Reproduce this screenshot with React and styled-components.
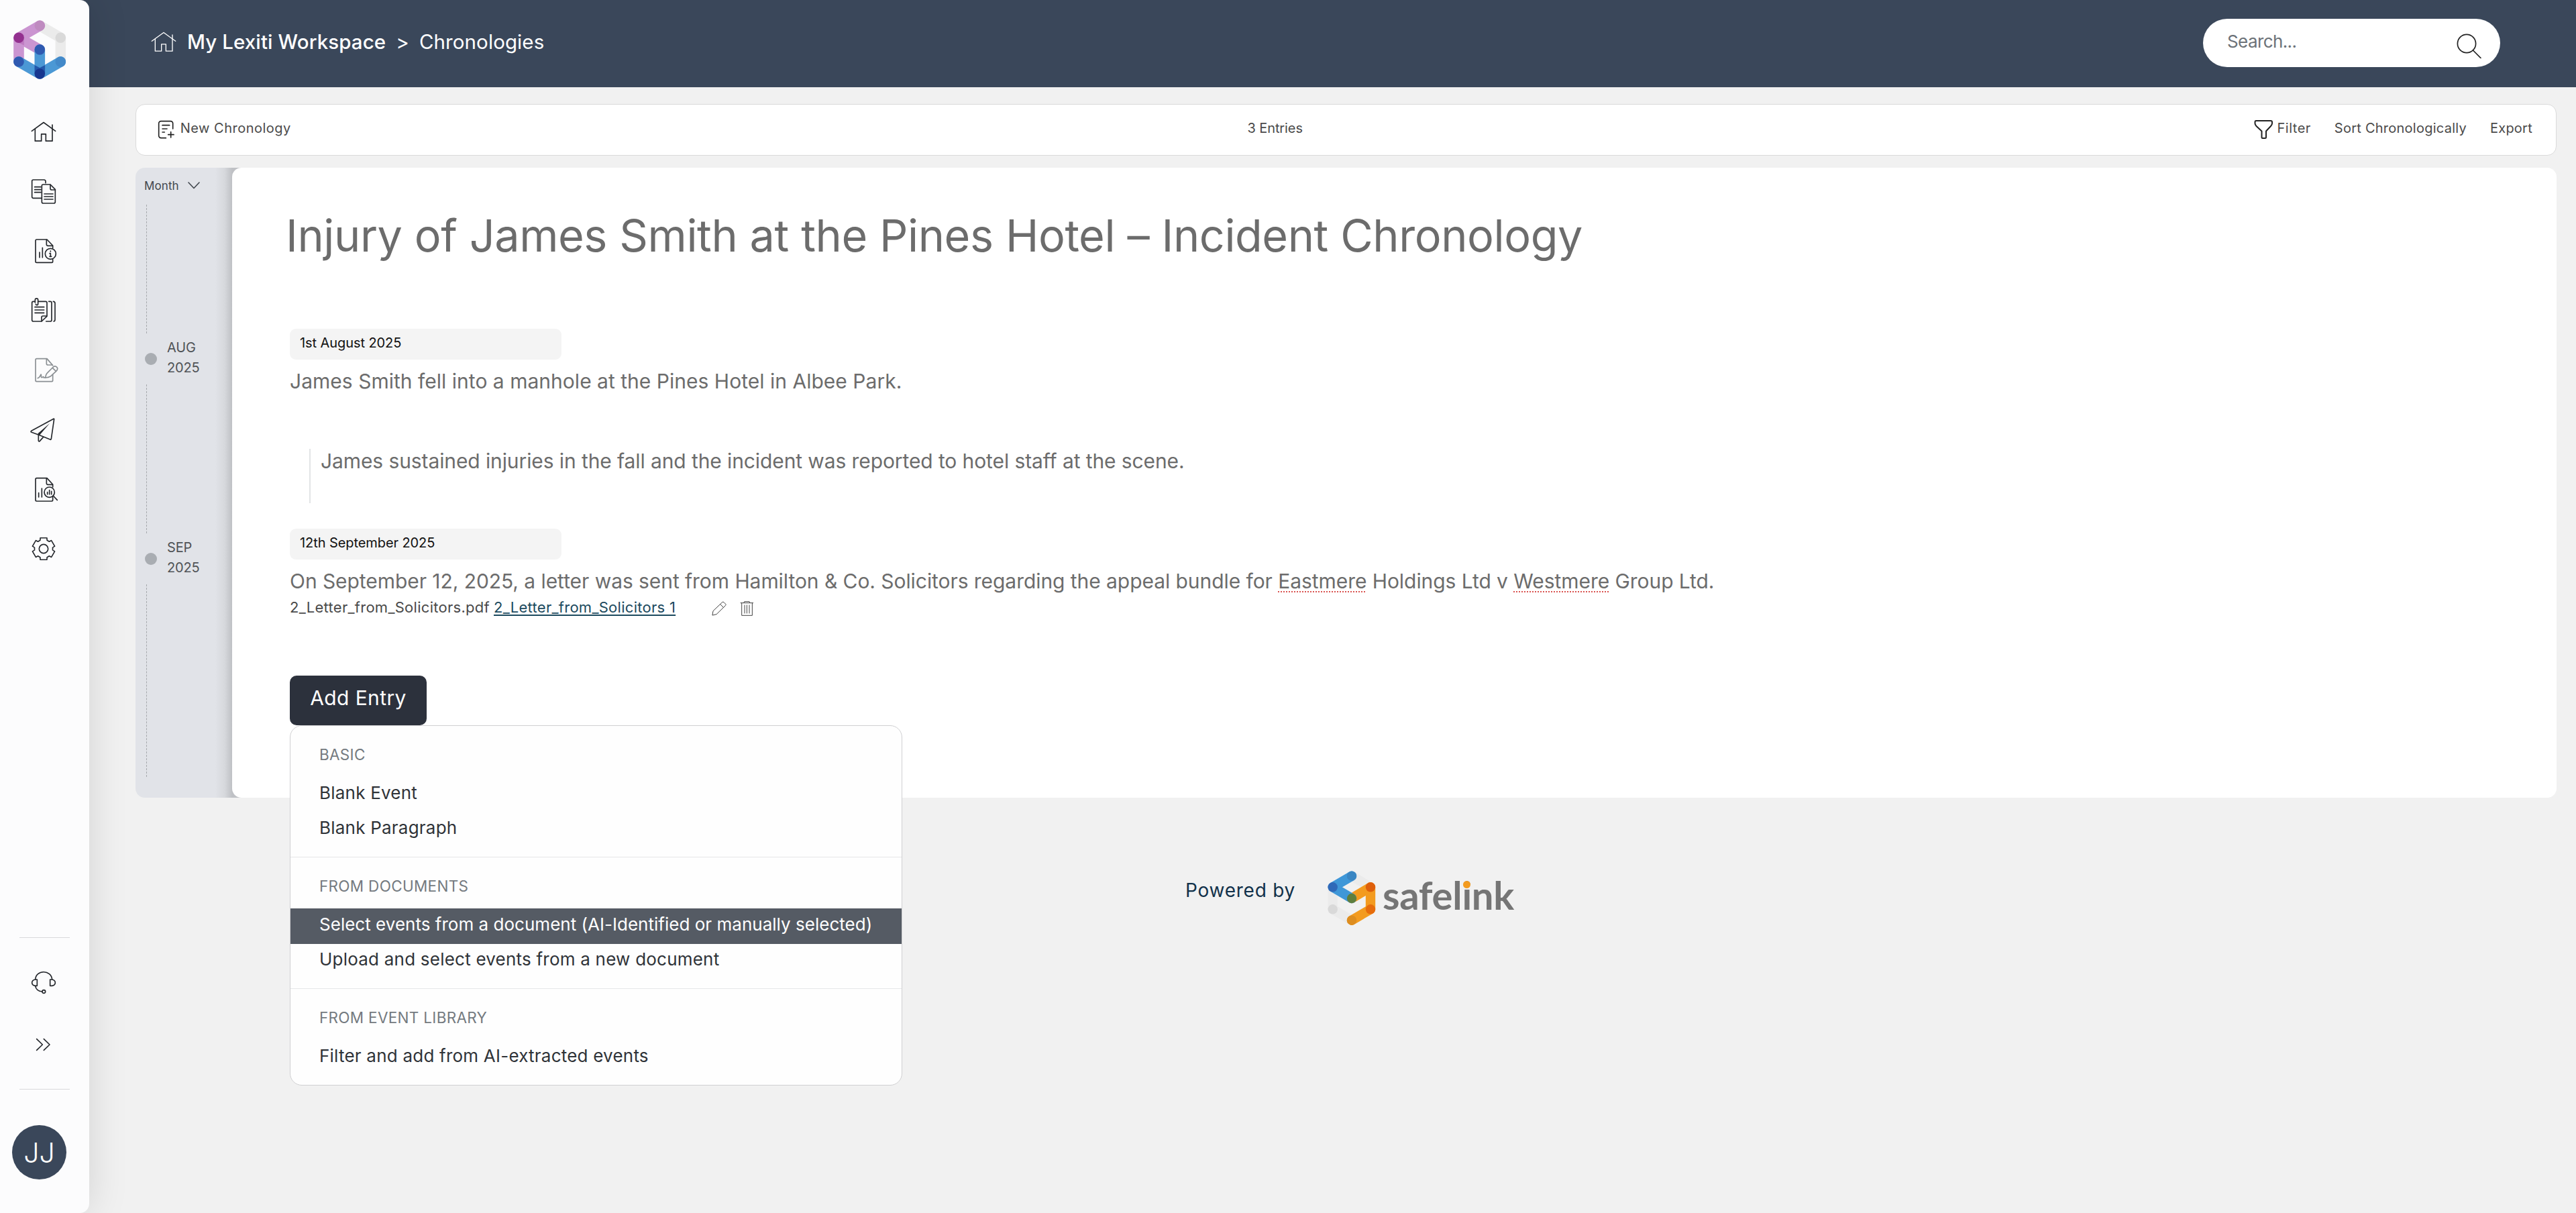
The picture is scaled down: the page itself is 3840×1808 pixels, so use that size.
import React, { useState } from 'react'
import styled, { createGlobalStyle, css } from 'styled-components'

const GlobalStyle = createGlobalStyle`
  * {
    box-sizing: border-box;
  }
  body {
    margin: 0;
    background: #f1f1f1;
    font-family: Inter, 'Liberation Sans', sans-serif;
    color: #2f3338;
  }
  h1, p {
    margin: 0;
    font-weight: 400;
  }
  button {
    border: 0;
    padding: 0;
    background: none;
    font: inherit;
    color: inherit;
    text-align: left;
    letter-spacing: inherit;
  }
`

/* ---------- icons ---------- */

const HomeIcon = ({ width = 5 }) => (
  <LineIcon viewBox="0 0 132 132" $stroke={width}>
    <path d="M13 64 66 25.5 119 64" />
    <path d="M28 55V108.5H56V77.5H76V108.5H105V36" />
  </LineIcon>
)

const DocumentsIcon = () => (
  <LineIcon viewBox="0 0 132 132">
    <path d="M57 97H20a6 6 0 0 1-6-6V21a6 6 0 0 1 6-6h48q7 0 7 8v6" />
    <path d="M26 47H54M26 59H54M26 71H54" />
    <path d="M64 36H96L118 58V114a6 6 0 0 1-6 6H64a6 6 0 0 1-6-6V42a6 6 0 0 1 6-6z" />
    <path d="M96 37V54q0 6 6 6h16M69 78H108M69 90H108M69 102H108" />
  </LineIcon>
)

const InfoReportIcon = () => (
  <LineIcon viewBox="0 0 132 132">
    <path d="M107 54V42L81 15H35a5 5 0 0 0-5 5V113a5 5 0 0 0 5 5h67q5 0 5-5v-9" />
    <path d="M79 16V37q0 6 6 6h21M48 72V95M61 52V95" />
    <circle cx="97" cy="79" r="24" />
    <path d="M97 77V91M93 77h4M93 91h8M97 66v3" />
  </LineIcon>
)

const BinderIcon = () => (
  <LineIcon viewBox="0 0 132 132">
    <path d="M28 25H20a6 6 0 0 0-6 6V108a6 6 0 0 0 6 6H57L81 91V31a6 6 0 0 0-6-6H42" />
    <path d="M57 113V96q0-6 6-6h17M27 50H68M27 63H68M27 76H68" />
    <path d="M28 30V18a6 6 0 0 1 13 0V35a5 5 0 0 1-10 2" />
    <path d="M89 25h7q6 0 6 6v77q0 6-6 6H77M109 25q8 0 8 8v73q0 8-6 8" />
  </LineIcon>
)

const SignIcon = () => (
  <LineIcon viewBox="0 0 132 132">
    <path d="M107 44 81 14H35a5 5 0 0 0-5 5V111a5 5 0 0 0 5 5h67q5 0 5-5V86" />
    <path d="M79 15V36q0 6 6 6h20" />
    <path d="M74 99Q76 83 84 76L109 51Q118 44 126 53Q132 60 122 70L98 92Q88 98 74 99zM106 55 119 68" />
    <path d="M40 101Q47 99 52 88Q56 78 55 94Q56 102 63 95Q66 93 67 99L75 98" />
  </LineIcon>
)

const SendIcon = () => (
  <LineIcon viewBox="0 0 132 132">
    <path d="M112 15 11 70Q7 74 12 76L43 87 97 109 100 106 113 17z" />
    <path d="M43 87V114Q45 119 49 115L65 97" />
    <path className="solid" d="M94 35 40 82 47 90z" />
  </LineIcon>
)

const AnalysisIcon = () => (
  <LineIcon viewBox="0 0 132 132">
    <path d="M107 54V42L81 14H35a5 5 0 0 0-5 5V112a5 5 0 0 0 5 5h67q5 0 5-5V98" />
    <path d="M79 15V37q0 6 6 6h21M44 80V99M58 60V99" />
    <circle cx="92" cy="77" r="23" />
    <path d="M109 93 127 112M83 77V86M92 68V86M101 73V86" />
  </LineIcon>
)

// six-toothed cog, 60° per tooth
const cogPath = () => {
  const pts = []
  for (let i = 0; i < 6; i++) {
    const base = i * 60 - 90
    ;[
      [-22, 41],
      [-17, 51],
      [17, 51],
      [22, 41],
    ].forEach(([a, r]) => {
      const rad = ((base + a) * Math.PI) / 180
      pts.push(`${(66 + r * Math.cos(rad)).toFixed(1)} ${(66 + r * Math.sin(rad)).toFixed(1)}`)
    })
  }
  return `M${pts.join('L')}z`
}

const CogIcon = () => (
  <LineIcon viewBox="0 0 132 132">
    <path d={cogPath()} />
    <circle cx="66" cy="66" r="20" />
  </LineIcon>
)

const HeadsetIcon = () => (
  <LineIcon viewBox="0 0 132 132">
    <path d="M29 54C31 9 101 9 104 54" />
    <path d="M37 54H28Q14 57 14 68T28 82H37zM95 54H104Q118 57 118 68T104 82H95z" />
    <path d="M29 83Q33 106 60 108" />
    <circle cx="67" cy="108" r="7" />
  </LineIcon>
)

const ExpandIcon = () => (
  <LineIcon viewBox="0 0 132 132">
    <path d="M35 41 61 66 35 91M67 41 93 66 67 91" />
  </LineIcon>
)

const LexitiLogo = () => (
  <LogoSvg viewBox="18 28 84 92">
    <g strokeWidth="15.6" strokeLinecap="round" strokeLinejoin="round" fill="none">
      <path d="M59.3 38.3 90.3 56.3V92" stroke="#ebebeb" />
      <path d="M59.3 38.3 28 56.3V92M28 56.3 59.3 74" stroke="#cb95d1" />
      <path d="M28 92 59.3 110V74M59.3 110 90.3 92" stroke="#4b98d5" />
    </g>
    <path d="M35.800 52.500V67.500L28 64 33 50z" fill="#b567b6" opacity="0.6" />
    <path d="M51.5 97 59.3 101 67.100 97V110H51.5z" fill="#2258ab" />
    <circle cx="59.3" cy="38.3" r="7.8" fill="#bf8bc0" />
    <circle cx="90.3" cy="56.3" r="7.8" fill="#d9d9d9" />
    <circle cx="28" cy="56.3" r="7.8" fill="#93308f" />
    <circle cx="28" cy="92" r="7.8" fill="#2f59b0" />
    <circle cx="59.3" cy="74" r="7.8" fill="#2f59b0" />
    <circle cx="90.3" cy="92" r="7.8" fill="#4389c9" />
    <circle cx="59.3" cy="110" r="7.8" fill="#17368f" />
  </LogoSvg>
)

const SafelinkLogo = () => (
  <SafelinkSvg viewBox="1979 1298 72 82">
    <g strokeWidth="14.4" strokeLinecap="round" strokeLinejoin="round" fill="none">
      <path d="M2015 1305.7 2043 1322.3M1986.7 1322.3V1355.3L2015 1371.7" stroke="#ebebeb" />
      <path d="M2043 1322.3V1355.3L2015 1371.7M2043 1322.3 2015 1339" stroke="#f39b1f" />
      <path d="M2015 1305.7 1986.7 1322.3 2015 1339" stroke="#3f97d8" />
    </g>
    <circle cx="2015" cy="1305.7" r="7.2" fill="#3a86c3" />
    <circle cx="1986.7" cy="1322.3" r="7.2" fill="#2f69b8" />
    <circle cx="2015" cy="1339" r="7.2" fill="#5f7f3d" />
    <circle cx="2043" cy="1322.3" r="7.2" fill="#de5f0b" />
    <circle cx="2043" cy="1355.3" r="7.2" fill="#e66c0c" />
    <circle cx="2015" cy="1371.7" r="7.2" fill="#dd8d1f" />
    <circle cx="1986.7" cy="1355.3" r="7.2" fill="#d9d9d9" />
  </SafelinkSvg>
)

/* ---------- data ---------- */

const navItems = [
  { id: 'home', icon: HomeIcon },
  { id: 'documents', icon: DocumentsIcon },
  { id: 'reports', icon: InfoReportIcon },
  { id: 'bundles', icon: BinderIcon },
  { id: 'sign', icon: SignIcon, disabled: true },
  { id: 'send', icon: SendIcon },
  { id: 'analysis', icon: AnalysisIcon },
  { id: 'settings', icon: CogIcon },
]

const menuSections = [
  { title: 'Basic', items: ['Blank Event', 'Blank Paragraph'] },
  {
    title: 'From documents',
    items: [
      'Select events from a document (AI-Identified or manually selected)',
      'Upload and select events from a new document',
    ],
  },
  { title: 'From event library', items: ['Filter and add from AI-extracted events'] },
]

const App = () => {
  const [active, setActive] = useState(menuSections[1].items[0])

  return (
    <>
      <GlobalStyle />
      <Page>
        <Rail>
          <LexitiLogo />
          <Nav>
            {navItems.map(({ id, icon: Icon, disabled }) => (
              <NavItem key={id} $disabled={disabled}>
                <Icon />
              </NavItem>
            ))}
          </Nav>
          <RailBottom>
            <RailDivider />
            <NavItem $tall>
              <HeadsetIcon />
            </NavItem>
            <NavItem $tall>
              <ExpandIcon />
            </NavItem>
            <RailDivider />
            <Avatar>JJ</Avatar>
          </RailBottom>
        </Rail>

        <Main>
          <Header>
            <Breadcrumb>
              <HomeIcon width={4} />
              <Workspace>My Lexiti Workspace</Workspace>
              <span>&gt;</span>
              <span>Chronologies</span>
            </Breadcrumb>
            <Search>
              <span>Search...</span>
              <SearchSvg viewBox="0 0 38 38">
                <circle cx="16" cy="16" r="13.6" />
                <path d="M25.5 26 37 37.5" />
              </SearchSvg>
            </Search>
          </Header>

          <Toolbar>
            <ToolButton>
              <NewSvg viewBox="0 0 80 90">
                <path d="M40 83H18A10 10 0 0 1 8 73V18A10 10 0 0 1 18 8H61A10 10 0 0 1 71 18V42" />
                <path d="M24 26H56M24 42H45M24 57H34M50 68H75M62 56V81" />
              </NewSvg>
              New Chronology
            </ToolButton>
            <EntryCount>3 Entries</EntryCount>
            <ToolGroup>
              <ToolButton>
                <FilterSvg viewBox="0 0 28 30">
                  <path d="M3 2H25Q27 2 27 4V6Q27 8 25 10L18 17.5V26.5Q18 28 16.5 28H13Q11.5 28 11.5 26.5V17.5L3.5 10Q1.5 8 1.5 6V4Q1.5 2 3 2z" />
                </FilterSvg>
                Filter
              </ToolButton>
              <ToolText>Sort Chronologically</ToolText>
              <ToolText>Export</ToolText>
            </ToolGroup>
          </Toolbar>

          <Chronology>
            <Timeline>
              <Zoom>
                Month
                <ChevronSvg viewBox="0 0 18 11">
                  <path d="M1 1 9 9.5 17 1" />
                </ChevronSvg>
              </Zoom>
              <Dashes $height={192} />
              <Marker>
                <Dot />
                <span>
                  AUG
                  <br />
                  2025
                </span>
              </Marker>
              <Dashes $height={222} />
              <Marker>
                <Dot />
                <span>
                  SEP
                  <br />
                  2025
                </span>
              </Marker>
              <Dashes $height={287} />
            </Timeline>

            <Sheet>
              <Title>Injury of James Smith at the Pines Hotel – Incident Chronology</Title>

              <DatePill>1st August 2025</DatePill>
              <EntryText>James Smith fell into a manhole at the Pines Hotel in Albee Park.</EntryText>
              <Quote>
                James sustained injuries in the fall and the incident was reported to hotel staff at
                the scene.
              </Quote>

              <DatePill>12th September 2025</DatePill>
              <EntryText $tight>
                On September 12, 2025, a letter was sent from Hamilton &amp; Co. Solicitors regarding
                the appeal bundle for <Misspelt>Eastmere</Misspelt> Holdings Ltd v{' '}
                <Misspelt>Westmere</Misspelt> Group Ltd.
              </EntryText>
              <FileRow>
                <span>2_Letter_from_Solicitors.pdf</span>
                <FileLink>2_Letter_from_Solicitors 1</FileLink>
                <PencilSvg viewBox="0 0 66 66">
                  <path d="M3 62 6 44 47 5Q51 2 54 5L62 13Q65 17 61 20L22 58zM38 14 53 29" />
                </PencilSvg>
                <TrashSvg viewBox="0 0 62 72">
                  <path d="M3 11H59M17 11 20 5H42L45 11M8 11V67H55V11M21 21V57M31 21V57M42 21V57" />
                </TrashSvg>
              </FileRow>

              <AddEntry>
                <AddButton>Add Entry</AddButton>
                <Menu>
                  {menuSections.map(({ title, items }) => (
                    <MenuSection key={title}>
                      <MenuLabel>{title}</MenuLabel>
                      {items.map((item) => (
                        <MenuItem
                          key={item}
                          $active={item === active}
                          onMouseEnter={() => setActive(item)}
                        >
                          {item}
                        </MenuItem>
                      ))}
                    </MenuSection>
                  ))}
                </Menu>
              </AddEntry>
            </Sheet>
          </Chronology>

          <Footer>
            <PoweredBy>Powered by</PoweredBy>
            <SafelinkLogo />
            <Wordmark>
              safel<DottedI>i</DottedI>nk
            </Wordmark>
          </Footer>
        </Main>
      </Page>
    </>
  )
}

/* ---------- svg styles ---------- */

const strokes = css`
  flex: none;
  fill: none;
  stroke: currentColor;
  stroke-linecap: round;
  stroke-linejoin: round;
`

const LineIcon = styled.svg`
  ${strokes}
  width: 44px;
  height: 44px;
  stroke-width: ${({ $stroke }) => $stroke || 5};
  .solid {
    fill: currentColor;
    stroke: none;
  }
`

const LogoSvg = styled.svg`
  width: 84px;
  height: 92px;
  margin-left: 18px;
`

const SafelinkSvg = styled.svg`
  width: 72px;
  height: 82px;
  margin-left: 48px;
`

const SearchSvg = styled.svg`
  ${strokes}
  width: 38px;
  height: 38px;
  stroke-width: 1.7;
  color: #222;
  margin: 12px 1px 0 0;
`

const NewSvg = styled.svg`
  ${strokes}
  width: 26.7px;
  height: 30px;
  stroke-width: 5;
  color: #222;
  margin: 4px 8px 0 0;
`

const FilterSvg = styled.svg`
  ${strokes}
  width: 28px;
  height: 30px;
  stroke-width: 2;
  color: #222;
  margin: 3px 7px 0 0;
`

const ChevronSvg = styled.svg`
  ${strokes}
  width: 18px;
  height: 11px;
  stroke-width: 1.6;
  margin-left: 13px;
`

const PencilSvg = styled.svg`
  ${strokes}
  width: 22px;
  height: 22px;
  stroke-width: 3;
  color: #444;
  margin: 4px 0 0 54px;
`

const TrashSvg = styled.svg`
  ${strokes}
  width: 20.7px;
  height: 24px;
  stroke-width: 3;
  color: #444;
  margin: 4px 0 0 20px;
`

/* ---------- layout ---------- */

const Page = styled.div`
  display: flex;
  height: 1808px;
  overflow: hidden;
`

const Rail = styled.aside`
  position: relative;
  z-index: 1;
  flex: none;
  display: flex;
  flex-direction: column;
  width: 133px;
  padding: 28px 0 50px;
  background: #fcfcfd;
  border-radius: 0 14px 14px 0;
  box-shadow: 0 0 60px rgba(0, 0, 0, 0.13);
`

const Nav = styled.nav`
  margin-top: 32px;
`

const NavItem = styled.div`
  display: flex;
  align-items: center;
  justify-content: center;
  height: ${({ $tall }) => ($tall ? '92.6px' : '88.86px')};
  padding-right: 4px;
  color: ${({ $disabled }) => ($disabled ? '#8b9094' : '#25282d')};
`

const RailBottom = styled.div`
  margin-top: auto;
`

const RailDivider = styled.div`
  height: 1px;
  margin: 20px 29px;
  background: #d9d9db;
`

const Avatar = styled.div`
  display: flex;
  align-items: center;
  justify-content: center;
  width: 81px;
  height: 81px;
  margin: 53px 0 0 18px;
  border-radius: 50%;
  background: #3a475a;
  color: white;
  font-size: 41px;
  font-weight: 300;
`

const Main = styled.main`
  flex: 1;
  display: flex;
  flex-direction: column;
  min-width: 0;
  margin-left: -20px;
`

const Header = styled.header`
  display: flex;
  align-items: center;
  justify-content: space-between;
  height: 130px;
  padding: 0 113px 7px 109px;
  background: #3a475a;
  color: white;
`

const Breadcrumb = styled.div`
  display: flex;
  align-items: center;
  gap: 15px;
  font-size: 29.5px;
  letter-spacing: 0.1px;
`

const Workspace = styled.span`
  font-weight: 500;
  margin-left: -2px;
`

const Search = styled.div`
  display: flex;
  align-items: center;
  justify-content: space-between;
  width: 443px;
  height: 72px;
  margin-top: 5px;
  padding: 0 27px 5px 36px;
  background: white;
  border-radius: 36px;
  color: #6c7278;
  font-size: 26px;
  letter-spacing: -0.6px;
`

const Toolbar = styled.div`
  display: flex;
  align-items: center;
  justify-content: space-between;
  height: 77px;
  margin: 25px 29px 0 89px;
  padding: 0 35px 5px 31px;
  background: white;
  border: 1px solid #dadada;
  border-radius: 14px;
  color: #4a4a4a;
  font-size: 20px;
  letter-spacing: 0.5px;
`

const ToolButton = styled.button`
  display: flex;
  align-items: center;
`

const ToolText = styled.span`
  letter-spacing: 0.25px;
`

const EntryCount = styled(ToolText)`
  letter-spacing: -0.1px;
  padding-left: 8px;
`

const ToolGroup = styled.div`
  display: flex;
  align-items: center;
  gap: 35px;
`

const Chronology = styled.section`
  display: flex;
  height: 939px;
  margin: 18px 29px 0 89px;
`

const Timeline = styled.div`
  flex: none;
  width: 158px;
  border-radius: 14px 0 0 14px;
  background: linear-gradient(to right, #e1e3e8 119px, #d6d8dc 133px, #bfc1c5 144px);
  color: #505357;
`

const Zoom = styled.div`
  display: flex;
  align-items: center;
  height: 53px;
  padding-left: 13px;
  margin-bottom: 2px;
  font-size: 17px;
  letter-spacing: 0.1px;
  color: #41474e;
`

const Dashes = styled.div`
  height: ${({ $height }) => $height}px;
  margin-left: 16px;
  border-left: 1px dashed #a5a8ac;
`

const Marker = styled.div`
  display: flex;
  align-items: center;
  gap: 15px;
  height: 76px;
  padding-left: 14px;
  font-size: 20px;
  line-height: 30px;
  letter-spacing: -0.2px;
  span {
    margin-top: -4px;
  }
`

const Dot = styled.i`
  width: 18px;
  height: 18px;
  border-radius: 50%;
  background: #a9adb2;
`

const Sheet = styled.article`
  flex: 1;
  margin-left: -14px;
  padding: 61px 0 0 86px;
  background: white;
  border-radius: 14px;
`

const Title = styled.h1`
  margin: 0 0 99px -6px;
  font-size: 66.5px;
  line-height: 80px;
  letter-spacing: -0.42px;
  color: #6c6c6c;
`

const DatePill = styled.div`
  width: 405px;
  height: 46px;
  padding: 0 15px 5px;
  background: #f4f4f4;
  border-radius: 9px;
  color: #111;
  font-size: 20px;
  line-height: 42px;
  letter-spacing: -0.08px;
`

const EntryText = styled.p`
  margin-top: 12px;
  font-size: 30px;
  line-height: 40px;
  letter-spacing: ${({ $tight }) => ($tight ? '-0.06px' : '0.02px')};
  color: #6c6c6c;
`

const Quote = styled.blockquote`
  height: 81px;
  margin: 81px 0 38px 29px;
  padding-left: 15px;
  border-left: 2px solid #e2e4e6;
  font-size: 30px;
  line-height: 37px;
  letter-spacing: -0.1px;
  color: #6c6c6c;
`

const Misspelt = styled.span`
  text-decoration: underline dotted #d9534f 2px;
  text-underline-offset: 4px;
`

const FileRow = styled.div`
  display: flex;
  align-items: center;
  height: 30px;
  margin-top: 4px;
  font-size: 22px;
  letter-spacing: 0.28px;
  color: #4a4a4a;
`

const FileLink = styled.a`
  margin-left: 6px;
  color: #1c4a5e;
  text-decoration: underline;
  text-decoration-thickness: 2px;
  text-underline-offset: 3px;
`

const AddEntry = styled.div`
  position: relative;
  width: 204px;
  margin-top: 87px;
`

const AddButton = styled.button`
  display: block;
  width: 204px;
  height: 74px;
  padding: 0 0 8px;
  border-radius: 10px;
  background: #2c313c;
  color: white;
  font-size: 30px;
  letter-spacing: 0.4px;
  text-align: center;
`

const Menu = styled.div`
  position: absolute;
  top: 100%;
  left: 0;
  width: 913px;
  background: #fefefe;
  border: 1px solid #d0d0d2;
  border-radius: 18px;
`

const MenuSection = styled.div`
  padding-bottom: 14px;
  & + & {
    border-top: 1px solid #e6e7e8;
  }
`

const MenuLabel = styled.div`
  padding: 28px 43px 18px;
  font-size: 22.5px;
  line-height: 30px;
  letter-spacing: 0.3px;
  text-transform: uppercase;
  color: #747a80;
`

const MenuItem = styled.button`
  display: block;
  width: 100%;
  height: 52.5px;
  padding: 0 43px 6px;
  font-size: 26px;
  letter-spacing: ${({ $active }) => ($active ? '0.02px' : '0.22px')};
  white-space: nowrap;
  color: ${({ $active }) => ($active ? '#fff' : '#2f3338')};
  background: ${({ $active }) => ($active ? '#555b64' : 'none')};
`

const Footer = styled.footer`
  display: flex;
  align-items: center;
  justify-content: center;
  height: 82px;
  margin: 109px 19px 0 90px;
`

const PoweredBy = styled.span`
  margin-top: -24px;
  font-size: 28px;
  letter-spacing: 0.75px;
  color: #12314a;
`

const Wordmark = styled.span`
  margin: -12px 0 0 10px;
  font-family: Lato, sans-serif;
  font-size: 58px;
  font-weight: 700;
  letter-spacing: -0.3px;
  color: #757575;
`

const DottedI = styled.span`
  position: relative;
  &::after {
    content: '';
    position: absolute;
    top: 14px;
    left: 50%;
    width: 11px;
    height: 11px;
    margin-left: -6px;
    border-radius: 50%;
    background: #f39b1f;
  }
`

export default App
